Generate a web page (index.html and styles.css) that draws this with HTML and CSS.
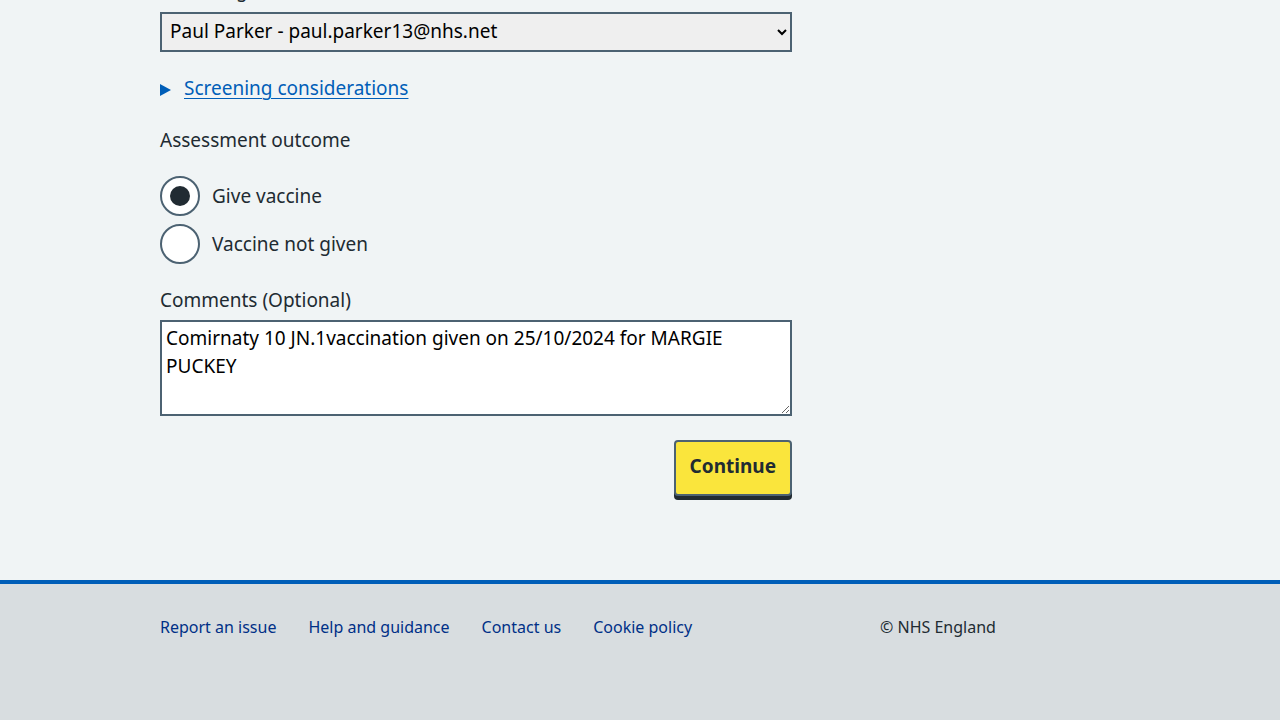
FILE: index.html
```html
<!DOCTYPE html>
<html lang="en">
<head>
<meta charset="utf-8">
<title>Assessment</title>
<link rel="stylesheet" href="styles.css">
</head>
<body>
<main class="main">
  <div class="container">
    <form class="form">
      <div class="group">
        <label class="label" for="clinician">Assessing clinician</label>
        <select class="select" id="clinician">
          <option>Paul Parker - paul.parker13@nhs.net</option>
        </select>
      </div>

      <details class="details">
        <summary class="summary"><span class="arrow"></span><span class="summary-text">Screening considerations</span></summary>
      </details>

      <fieldset class="fieldset">
        <legend class="legend">Assessment outcome</legend>
        <div class="radios">
          <label class="radio">
            <input type="radio" name="outcome" checked>
            <span class="radio-mark"></span>
            <span class="radio-label">Give vaccine</span>
          </label>
          <label class="radio">
            <input type="radio" name="outcome">
            <span class="radio-mark"></span>
            <span class="radio-label">Vaccine not given</span>
          </label>
        </div>
      </fieldset>

      <div class="group">
        <label class="label label-tight" for="comments">Comments (Optional)</label>
        <textarea class="textarea" id="comments" rows="3">Comirnaty 10 JN.1vaccination given on 25/10/2024 for MARGIE PUCKEY</textarea>
      </div>

      <div class="actions">
        <button type="button" class="button">Continue</button>
      </div>
    </form>
  </div>
</main>
<footer class="footer">
  <div class="container footer-inner">
    <ul class="footer-links">
      <li><a href="#">Report an issue</a></li>
      <li><a href="#">Help and guidance</a></li>
      <li><a href="#">Contact us</a></li>
      <li><a href="#">Cookie policy</a></li>
    </ul>
    <p class="copyright">© NHS England</p>
  </div>
</footer>
</body>
</html>
```

FILE: styles.css
```css
* { box-sizing: border-box; }
html, body {
  margin: 0;
  padding: 0;
  background: #f0f4f5;
}
body {
  font-family: "Noto Sans", "Open Sans", Arial, sans-serif;
  color: #212b32;
  font-size: 19px;
  line-height: 28px;
  min-height: 720px;
  display: flex;
  flex-direction: column;
}
.main {
  margin-top: -24px;
  padding-bottom: 80px;
}
.container {
  width: 960px;
  margin: 0 auto;
}
.form {
  width: 632px;
  display: flex;
  flex-direction: column;
}
.group {
  display: flex;
  flex-direction: column;
}
.label, .legend {
  display: block;
  font-size: 19px;
  line-height: 28px;
  color: #212b32;
  margin-bottom: 8px;
}
.label-tight {
  margin-bottom: 6px;
}
.select {
  height: 40px;
  width: 100%;
  border: 2px solid #4c6272;
  border-radius: 0;
  background: #efefef;
  font-family: inherit;
  font-size: 19px;
  color: #000;
  padding: 0 6px 3px 4px;
}
.details {
  margin-top: 22px;
  margin-bottom: 24px;
}
.summary {
  list-style: none;
  display: flex;
  align-items: center;
  color: #005eb8;
  cursor: pointer;
}
.summary::-webkit-details-marker { display: none; }
.arrow {
  width: 0;
  height: 0;
  border-top: 6.5px solid transparent;
  border-bottom: 6.5px solid transparent;
  border-left: 11px solid #005eb8;
  margin-right: 13px;
  margin-top: 3px;
}
.summary-text {
  text-decoration: underline;
  text-underline-offset: 3px;
  text-decoration-thickness: 1px;
}
.fieldset {
  border: 0;
  margin: 0 0 22px 0;
  padding: 0;
}
.legend {
  padding: 0;
  margin-bottom: 22px;
}
.radios {
  display: flex;
  flex-direction: column;
  gap: 8px;
}
.radio {
  display: flex;
  align-items: center;
  position: relative;
  cursor: pointer;
}
.radio input {
  position: absolute;
  opacity: 0;
  width: 40px;
  height: 40px;
  margin: 0;
}
.radio-mark {
  width: 40px;
  height: 40px;
  border: 2px solid #4c6272;
  border-radius: 50%;
  background: #fff;
  display: flex;
  align-items: center;
  justify-content: center;
  flex: none;
}
.radio input:checked + .radio-mark::after {
  content: "";
  width: 20px;
  height: 20px;
  border-radius: 50%;
  background: #212b32;
}
.radio-label {
  margin-left: 12px;
  color: #212b32;
}
.textarea {
  width: 100%;
  height: 96px;
  border: 2px solid #4c6272;
  border-radius: 0;
  background: #fff;
  font-family: inherit;
  font-size: 19px;
  line-height: 28px;
  color: #000;
  padding: 2px 4px;
  resize: vertical;
  display: block;
}
.actions {
  display: flex;
  justify-content: flex-end;
  margin-top: 24px;
}
.button {
  background: #fae53c;
  border: 2px solid #4c6272;
  border-radius: 4px;
  box-shadow: 0 4px 0 #212b32;
  font-family: inherit;
  font-weight: 700;
  font-size: 19px;
  line-height: 24px;
  color: #212b32;
  padding: 12px 14px 16px;
  margin-bottom: 4px;
  cursor: pointer;
}
.footer {
  flex: 1;
  background: #d8dde0;
  border-top: 4px solid #005eb8;
  padding-top: 31px;
}
.footer-inner {
  display: flex;
  align-items: flex-start;
}
.footer-links {
  list-style: none;
  margin: 0;
  padding: 0;
  display: flex;
  gap: 32px;
  width: 720px;
}
.footer-links li {
  display: block;
}
.footer-links a {
  display: block;
  color: #003087;
  font-size: 16px;
  line-height: 24px;
  text-decoration: none;
}
.copyright {
  margin: 0;
  font-size: 16px;
  line-height: 24px;
  color: #212b32;
}
```
